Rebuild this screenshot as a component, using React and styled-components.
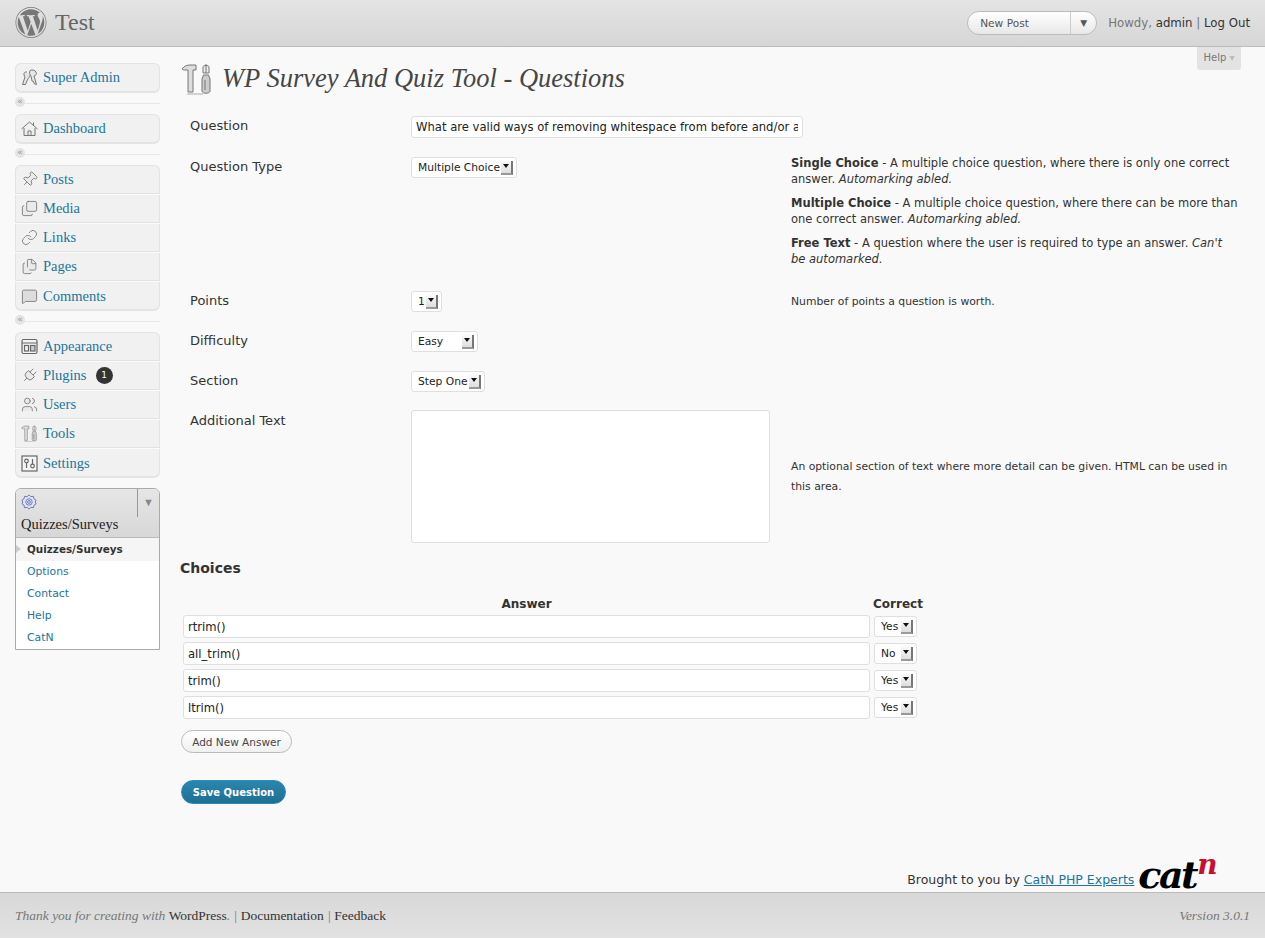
import React from "react";
import styled, { createGlobalStyle } from "styled-components";
import { Pin, Images, Link, Files, MessageSquare, Plug, Users } from "lucide-react";
import { FaWordpress } from "react-icons/fa";

const sans = `"DejaVu Sans", Verdana, sans-serif`;
const serif = `"Liberation Serif", Georgia, serif`;

const GlobalStyle = createGlobalStyle`
  html, body { margin: 0; padding: 0; background: #f9f9f9; }
  body { font-family: ${sans}; font-size: 12px; color: #333; }
  * { box-sizing: border-box; }
  a { text-decoration: none; }
`;

const ToolsIcon = ({ size }) => (
  <svg width={size} height={size} viewBox="0 0 32 32" fill="none" stroke="#777" strokeWidth="1">
    <path d="M1 6 C3 3 6 2 9 2 H15 V7 H12 V29 H7 V7 H5 C3 7 2 7 1 6 Z" fill="#ddd" />
    <path d="M25 1 V10 M22 4 C22 2 28 2 28 4 V10 H22 Z" fill="#eee" />
    <path d="M22.5 12 H27.5 L29 16 V28 C29 31 21 31 21 28 V16 Z" fill="#ccc" />
    <path d="M24 17 V27" />
    <path d="M6 31 H22" stroke="#aaa" />
  </svg>
);

const KeysIcon = () => (
  <svg width="17" height="17" viewBox="0 0 17 17" fill="#e6e6e6" stroke="#777" strokeWidth="1">
    <path d="M9 1.5 C11 .5 14 1 15 3 C16 5 14.5 7 13 7 L15.5 15.5 L13 14.5 L12.5 12.5 L11 12 L10 7 C8.5 6 8 3 9 1.5 Z" />
    <path d="M6 3 C4 2.5 2.5 4 3 6 L4 8 L1.5 15.5 H4.5 L7 9.5 C8 9 8.5 8 8.5 6.5" />
  </svg>
);

const HouseIcon = () => (
  <svg width="17" height="17" viewBox="0 0 17 17" fill="none" stroke="#777" strokeWidth="1">
    <path d="M.5 9 L8.5 2 L16.5 9" />
    <path d="M3 8 V15.5 H14 V8" fill="#eee" />
    <path d="M7 15.5 V11 H10 V15.5 M12.5 2.5 V5" />
  </svg>
);

const AppearanceIcon = () => (
  <svg width="17" height="17" viewBox="0 0 17 17" fill="none" stroke="#666" strokeWidth="1.2">
    <rect x="1" y="1.5" width="15" height="14" rx="1.5" fill="#f4f4f4" />
    <path d="M1 5 H16" />
    <rect x="3.5" y="7.5" width="4" height="5.5" />
    <rect x="9.5" y="7.5" width="4.5" height="5.5" fill="#ccc" />
  </svg>
);

const SettingsIcon = () => (
  <svg width="17" height="17" viewBox="0 0 17 17" fill="none" stroke="#666" strokeWidth="1.2">
    <rect x="1" y="1" width="15" height="15" fill="#f4f4f4" />
    <circle cx="5.5" cy="6" r="1.8" />
    <path d="M5.5 8 V13 M11.5 4 V9" />
    <circle cx="11.5" cy="11" r="1.8" />
  </svg>
);

const GearFlower = () => (
  <svg width="16" height="16" viewBox="0 0 18 18" fill="#dfe3f2" stroke="#5f6fb0" strokeWidth="1">
    <path d="M9 1 L11 3 L14 2.6 L14.6 5.4 L17 7 L16 9 L17 11 L14.6 12.6 L14 15.4 L11 15 L9 17 L7 15 L4 15.4 L3.4 12.6 L1 11 L2 9 L1 7 L3.4 5.4 L4 2.6 L7 3 Z" />
    <circle cx="9" cy="9" r="3.6" fill="#eef" />
    <circle cx="9" cy="9" r="1.6" />
  </svg>
);

const Page = styled.div`
  min-height: 938px;
  display: flex;
  flex-direction: column;
`;

const Header = styled.header`
  height: 47px;
  flex: none;
  display: flex;
  align-items: center;
  padding: 0 15px 1px 15px;
  background: linear-gradient(#e4e4e4, #d6d6d6);
  border-bottom: 1px solid #bbb;
`;

const Logo = styled.div`
  display: flex;
  align-items: center;
  color: #777;
  width: 32px;
  height: 32px;
  font-size: 33px;
`;

const SiteName = styled.div`
  font-family: ${serif};
  font-size: 24px;
  color: #666;
  margin-left: 8px;
  flex: 1;
`;

const Favorite = styled.div`
  width: 130px;
  height: 24px;
  display: flex;
  border: 1px solid #bbb;
  border-radius: 12px;
  background: linear-gradient(#fff, #e8e8e8);
  color: #555;
  font-size: 10.6px;
  overflow: hidden;
`;

const FavLabel = styled.div`
  flex: 1;
  padding-left: 12px;
  line-height: 22px;
  border-right: 1px solid #ccc;
`;

const FavArrow = styled.div`
  width: 25px;
  text-align: center;
  line-height: 22px;
  font-size: 9px;
  color: #555;
`;

const Howdy = styled.div`
  margin-left: 11px;
  font-size: 11.75px;
  color: #777;
  a { color: #333; }
`;

const Body = styled.div`
  flex: 1;
  display: flex;
  align-items: flex-start;
`;

const Sidebar = styled.nav`
  width: 145px;
  margin: 16px 0 0 15px;
  flex: none;
`;

const MenuGroup = styled.div`
  border-radius: 6px;
  background: #f1f1f1;
  overflow: hidden;
  box-shadow: inset 0 0 0 1px #e3e3e3, 0 1px 0 #e4e4e4;
`;

const MenuItem = styled.a`
  height: 29px;
  display: flex;
  align-items: center;
  padding-left: 6px;
  font-family: ${serif};
  font-size: 14.5px;
  color: #21759b;
  border-top: ${(p) => (p.$first ? "0" : "1px solid #fbfbfb")};
  border-bottom: ${(p) => (p.$last ? "0" : "1px solid #e2e2e2")};
  svg { flex: none; transform: rotate(${(p) => p.$turn || 0}deg); }
`;

const MenuLabel = styled.span`
  margin-left: 5px;
`;

const Badge = styled.span`
  width: 17px;
  height: 17px;
  border-radius: 50%;
  background: #333;
  color: #fff;
  font-family: ${sans};
  font-size: 9px;
  line-height: 17px;
  text-align: center;
  margin-left: 9px;
`;

const Separator = styled.div`
  height: 22px;
  position: relative;
  display: flex;
  align-items: center;
  &::before {
    content: "";
    flex: 1;
    height: 1px;
    background: #e6e6e6;
  }
  &::after {
    content: "«";
    position: absolute;
    left: 0;
    top: 5px;
    width: 10px;
    height: 10px;
    border-radius: 50%;
    background: #e4e4e4;
    color: #999;
    font-size: 9px;
    line-height: 8px;
    text-align: center;
  }
`;

const QuizMenu = styled.div`
  margin-top: 11px;
  border: 1px solid #aaa;
  border-radius: 6px 6px 0 0;
  background: #fff;
`;

const QuizHead = styled.div`
  height: 49px;
  position: relative;
  padding: 5px 0 0 5px;
  border-radius: 5px 5px 0 0;
  border-bottom: 1px solid #bbb;
  background: linear-gradient(#e6e6e6, #d7d7d7);
  font-family: ${serif};
  font-size: 14.5px;
  color: #222;
`;

const QuizTitle = styled.div`
  margin-top: 2px;
  white-space: nowrap;
`;

const QuizToggle = styled.div`
  position: absolute;
  right: 0;
  top: 0;
  width: 22px;
  height: 28px;
  border-left: 1px solid #999;
  color: #888;
  font-size: 11px;
  line-height: 26px;
  text-align: center;
`;

const SubItem = styled.a`
  display: block;
  height: ${(p) => (p.$active ? "23px" : "22px")};
  line-height: 22px;
  padding-left: 11px;
  font-size: ${(p) => (p.$active ? "10.4px" : "10.8px")};
  position: relative;
  color: ${(p) => (p.$active ? "#333" : "#21759b")};
  font-weight: ${(p) => (p.$active ? "bold" : "normal")};
  background: ${(p) => (p.$active ? "#f5f5f5" : "#fff")};
  ${(p) =>
    p.$active &&
    `&::before {
      content: "";
      position: absolute;
      left: 0;
      top: 7px;
      border: 4px solid transparent;
      border-left: 5px solid #ccc;
    }`}
`;

const Content = styled.main`
  flex: 1;
  margin-left: 20px;
  padding-right: 25px;
  position: relative;
`;

const HelpTab = styled.div`
  position: absolute;
  right: 24px;
  top: 0;
  width: 44px;
  height: 23px;
  background: #e3e3e3;
  border-radius: 0 0 3px 3px;
  color: #777;
  font-size: 10px;
  line-height: 22px;
  text-align: center;
  span { color: #bbb; }
`;

const TitleRow = styled.div`
  display: flex;
  align-items: center;
  height: 34px;
  margin-top: 15px;
  padding-left: 1px;
`;

const Title = styled.h2`
  margin: -2px 0 0 9px;
  font-family: ${serif};
  font-style: italic;
  font-weight: normal;
  font-size: 26.5px;
  color: #464646;
`;

const Form = styled.div`
  margin-top: 19px;
`;

const FormRow = styled.div`
  display: grid;
  grid-template-columns: 231px 380px 1fr;
  height: ${(p) => p.$height}px;
`;

const RowLabel = styled.div`
  padding: ${(p) => p.$top || 0}px 0 0 10px;
  font-size: 13px;
  color: #333;
`;

const Cell = styled.div`
  padding-top: ${(p) => p.$top || 0}px;
`;

const TextInput = styled.input`
  display: block;
  width: ${(p) => p.$width}px;
  height: ${(p) => p.$height || 22}px;
  border: 1px solid #dfdfdf;
  border-radius: 3px;
  background: #fff;
  padding: 0 4px;
  font-family: ${sans};
  font-size: 11.6px;
  color: #222;
  outline: none;
`;

const Select = styled.div`
  width: ${(p) => p.$width}px;
  height: ${(p) => p.$height || 21}px;
  display: flex;
  align-items: center;
  justify-content: space-between;
  border: 1px solid #dfdfdf;
  border-radius: 3px;
  background: #fff;
  padding: 0 3px 0 6px;
  font-size: 10.7px;
  color: #222;
  white-space: nowrap;
`;

const SelectArrow = styled.span`
  width: 12px;
  height: 14px;
  flex: none;
  position: relative;
  background: linear-gradient(#fafafa, #ddd);
  border-right: 2px solid #777;
  border-bottom: 2px solid #999;
  &::after {
    content: "";
    position: absolute;
    left: 2px;
    top: 3px;
    border: 3px solid transparent;
    border-top: 4px solid #111;
  }
`;

const Dropdown = ({ value, width, height }) => (
  <Select $width={width} $height={height}>
    {value}
    <SelectArrow />
  </Select>
);

const Hint = styled.div`
  font-size: 10.8px;
  line-height: ${(p) => p.$line || 16}px;
  color: #333;
  padding-top: ${(p) => p.$top || 0}px;
  p { margin: 0 0 8px; font-size: 11.5px; line-height: 16px; }
  b { font-weight: bold; }
`;

const TextArea = styled.textarea`
  display: block;
  width: 359px;
  height: 133px;
  border: 1px solid #dfdfdf;
  border-radius: 3px;
  background: #fff;
  resize: none;
  outline: none;
`;

const SectionTitle = styled.h3`
  margin: 18px 0 0;
  font-size: 14px;
  line-height: 20px;
  color: #333;
`;

const ChoicesHead = styled.div`
  display: grid;
  grid-template-columns: 687px 48px;
  gap: 3px;
  margin: 18px 0 1px 3px;
  font-weight: bold;
  font-size: 12px;
  line-height: 16px;
  text-align: center;
  color: #333;
`;

const ChoiceRow = styled.div`
  display: flex;
  align-items: center;
  height: 27px;
  margin-left: 3px;
  gap: 4px;
`;

const Pill = styled.button`
  display: block;
  height: 23px;
  width: 111px;
  padding: 0;
  border: 1px solid #bbb;
  border-radius: 12px;
  background: linear-gradient(#fff, #f0f0f0);
  font-family: ${sans};
  font-size: 10.5px;
  color: #464646;
  margin: 9px 0 0 1px;
`;

const SaveButton = styled.button`
  display: block;
  height: 24px;
  width: 105px;
  padding: 0;
  border: 1px solid #298cba;
  border-radius: 12px;
  background: linear-gradient(#2a86ae, #1f6f93);
  font-family: ${sans};
  font-size: 10px;
  font-weight: bold;
  color: #fff;
  margin: 27px 0 0 1px;
`;

const Credit = styled.div`
  display: flex;
  justify-content: flex-end;
  align-items: flex-end;
  margin: 50px 25px 0 0;
  font-size: 12.5px;
  color: #333;
  height: 36px;
  a { color: #21759b; text-decoration: underline; }
`;

const CreditText = styled.span`
  line-height: 20px;
`;

const CatLogo = styled.span`
  margin-left: 4px;
  font-family: "DejaVu Serif", serif;
  font-weight: bold;
  font-style: italic;
  font-size: 38px;
  line-height: 30px;
  letter-spacing: -2.5px;
  color: #000;
  white-space: nowrap;
  sup {
    color: #c8102e;
    font-size: 28px;
    line-height: 0;
    vertical-align: 14px;
    margin-left: 1px;
  }
`;

const Footer = styled.footer`
  height: 46px;
  flex: none;
  display: flex;
  align-items: center;
  justify-content: space-between;
  padding: 0 15px 0 15px;
  background: linear-gradient(#d8d8d8, #e2e2e2);
  border-top: 1px solid #bbb;
  font-family: ${serif};
  font-size: 13.5px;
  font-style: italic;
  color: #777;
  a { color: #333; font-style: normal; }
`;

const icon = { size: 17, color: "#777", strokeWidth: 1.2, fill: "#eaeaea" };

const groups = [
  [{ label: "Super Admin", node: <KeysIcon /> }],
  [{ label: "Dashboard", node: <HouseIcon /> }],
  [
    { label: "Posts", node: <Pin {...icon} />, turn: 45 },
    { label: "Media", node: <Images {...icon} /> },
    { label: "Links", node: <Link {...icon} fill="none" /> },
    { label: "Pages", node: <Files {...icon} /> },
    { label: "Comments", node: <MessageSquare {...icon} fill="#ddd" /> },
  ],
];

const answers = [
  ["rtrim()", "Yes"],
  ["all_trim()", "No"],
  ["trim()", "Yes"],
  ["ltrim()", "Yes"],
];

const subItems = ["Options", "Contact", "Help", "CatN"];

export default function App() {
  return (
    <Page>
      <GlobalStyle />
      <Header>
        <Logo><FaWordpress /></Logo>
        <SiteName>Test</SiteName>
        <Favorite>
          <FavLabel>New Post</FavLabel>
          <FavArrow>▼</FavArrow>
        </Favorite>
        <Howdy>Howdy, <a>admin</a> | <a>Log Out</a></Howdy>
      </Header>

      <Body>
        <Sidebar>
          {groups.map((items, g) => (
            <React.Fragment key={g}>
              <MenuGroup>
                {items.map(({ label, node, turn }, i) => (
                  <MenuItem key={label} $turn={turn} $first={i === 0} $last={i === items.length - 1}>
                    {node}
                    <MenuLabel>{label}</MenuLabel>
                  </MenuItem>
                ))}
              </MenuGroup>
              <Separator />
            </React.Fragment>
          ))}
          <MenuGroup>
            <MenuItem $first><AppearanceIcon /><MenuLabel>Appearance</MenuLabel></MenuItem>
            <MenuItem $turn={45}><Plug {...icon} /><MenuLabel>Plugins</MenuLabel><Badge>1</Badge></MenuItem>
            <MenuItem><Users {...icon} /><MenuLabel>Users</MenuLabel></MenuItem>
            <MenuItem><ToolsIcon size={17} /><MenuLabel>Tools</MenuLabel></MenuItem>
            <MenuItem $last><SettingsIcon /><MenuLabel>Settings</MenuLabel></MenuItem>
          </MenuGroup>

          <QuizMenu>
            <QuizHead>
              <GearFlower />
              <QuizTitle>Quizzes/Surveys</QuizTitle>
              <QuizToggle>▼</QuizToggle>
            </QuizHead>
            <SubItem $active>Quizzes/Surveys</SubItem>
            {subItems.map((s) => <SubItem key={s}>{s}</SubItem>)}
          </QuizMenu>
        </Sidebar>

        <Content>
          <HelpTab>Help <span>▾</span></HelpTab>
          <TitleRow>
            <ToolsIcon size={32} />
            <Title>WP Survey And Quiz Tool - Questions</Title>
          </TitleRow>

          <Form>
            <FormRow $height={39}>
              <RowLabel $top={3}>Question</RowLabel>
              <Cell $top={1}>
                <TextInput readOnly $width={392} value="What are valid ways of removing whitespace from before and/or after a string?" />
              </Cell>
            </FormRow>
            <FormRow $height={134}>
              <RowLabel $top={5}>Question Type</RowLabel>
              <Cell $top={3}><Dropdown value="Multiple Choice" width={106} /></Cell>
              <Hint $top={1}>
                <p><b>Single Choice</b> - A multiple choice question, where there is only one correct answer. <i>Automarking abled.</i></p>
                <p><b>Multiple Choice</b> - A multiple choice question, where there can be more than one correct answer. <i>Automarking abled.</i></p>
                <p><b>Free Text</b> - A question where the user is required to type an answer. <i>Can't be automarked.</i></p>
              </Hint>
            </FormRow>
            <FormRow $height={40}>
              <RowLabel $top={5}>Points</RowLabel>
              <Cell $top={3}><Dropdown value="1" width={31} /></Cell>
              <Hint $top={6}>Number of points a question is worth.</Hint>
            </FormRow>
            <FormRow $height={40}>
              <RowLabel $top={5}>Difficulty</RowLabel>
              <Cell $top={3}><Dropdown value="Easy" width={67} /></Cell>
            </FormRow>
            <FormRow $height={40}>
              <RowLabel $top={5}>Section</RowLabel>
              <Cell $top={3}><Dropdown value="Step One" width={74} /></Cell>
            </FormRow>
            <FormRow $height={132}>
              <RowLabel $top={5}>Additional Text</RowLabel>
              <Cell $top={2}><TextArea /></Cell>
              <Hint $top={49} $line={20}>An optional section of text where more detail can be given. HTML can be used in this area.</Hint>
            </FormRow>
          </Form>

          <SectionTitle>Choices</SectionTitle>
          <ChoicesHead>
            <div>Answer</div>
            <div>Correct</div>
          </ChoicesHead>
          {answers.map(([text, correct]) => (
            <ChoiceRow key={text}>
              <TextInput readOnly $width={687} $height={23} value={text} />
              <Dropdown value={correct} width={43} />
            </ChoiceRow>
          ))}
          <Pill>Add New Answer</Pill>
          <SaveButton>Save Question</SaveButton>

          <Credit>
            <CreditText>Brought to you by <a>CatN PHP Experts</a></CreditText>
            <CatLogo>cat<sup>n</sup></CatLogo>
          </Credit>
        </Content>
      </Body>

      <Footer>
        <div>Thank you for creating with <a>WordPress</a>. | <a>Documentation</a> | <a>Feedback</a></div>
        <div>Version 3.0.1</div>
      </Footer>
    </Page>
  );
}
